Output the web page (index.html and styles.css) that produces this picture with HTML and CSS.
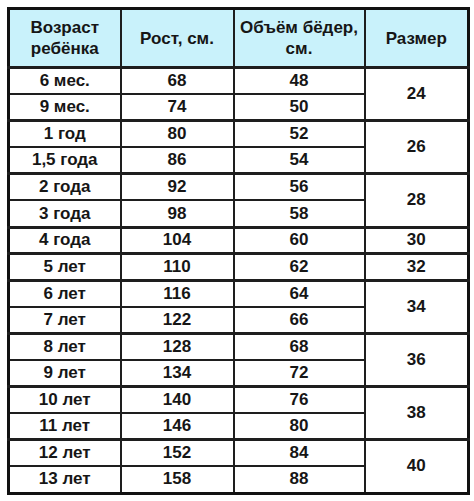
FILE: index.html
```html
<!DOCTYPE html>
<html lang="ru">
<head>
<meta charset="utf-8">
<title>Размеры</title>
<link rel="stylesheet" href="styles.css">
</head>
<body>
<table class="sizes">
  <colgroup>
    <col class="c1"><col class="c2"><col class="c3"><col class="c4">
  </colgroup>
  <thead>
    <tr class="head">
      <th>Возраст<br>ребёнка</th>
      <th>Рост, см.</th>
      <th>Объём бёдер,<br>см.</th>
      <th>Размер</th>
    </tr>
  </thead>
  <tbody>
    <tr class="g"><td>6 мес.</td><td>68</td><td>48</td><td rowspan="2">24</td></tr>
    <tr><td>9 мес.</td><td>74</td><td>50</td></tr>
    <tr class="g"><td>1 год</td><td>80</td><td>52</td><td rowspan="2">26</td></tr>
    <tr><td>1,5 года</td><td>86</td><td>54</td></tr>
    <tr class="g"><td>2 года</td><td>92</td><td>56</td><td rowspan="2">28</td></tr>
    <tr><td>3 года</td><td>98</td><td>58</td></tr>
    <tr class="g"><td>4 года</td><td>104</td><td>60</td><td>30</td></tr>
    <tr class="g"><td>5 лет</td><td>110</td><td>62</td><td>32</td></tr>
    <tr class="g"><td>6 лет</td><td>116</td><td>64</td><td rowspan="2">34</td></tr>
    <tr><td>7 лет</td><td>122</td><td>66</td></tr>
    <tr class="g"><td>8 лет</td><td>128</td><td>68</td><td rowspan="2">36</td></tr>
    <tr><td>9 лет</td><td>134</td><td>72</td></tr>
    <tr class="g"><td>10 лет</td><td>140</td><td>76</td><td rowspan="2">38</td></tr>
    <tr><td>11 лет</td><td>146</td><td>80</td></tr>
    <tr class="g"><td>12 лет</td><td>152</td><td>84</td><td rowspan="2">40</td></tr>
    <tr><td>13 лет</td><td>158</td><td>88</td></tr>
  </tbody>
</table>
</body>
</html>
```
FILE: styles.css
```css
html, body {
  margin: 0;
  padding: 0;
  background: #ffffff;
}
body {
  padding: 7px 0 0 7px;
  font-family: "Liberation Sans", Arial, sans-serif;
  color: #161616;
}
.sizes {
  border-collapse: collapse;
  table-layout: fixed;
  width: 460px;
  border: 3px solid #111111;
  font-size: 17px;
  font-weight: bold;
}
.c1 { width: 112px; }
.c2 { width: 113px; }
.c3 { width: 131px; }
.c4 { width: 104px; }
.sizes th, .sizes td {
  border: 2px solid #1e1e1e;
  text-align: center;
  vertical-align: middle;
  padding: 0;
}
.sizes th {
  background: #c9f2fb;
  font-weight: bold;
  line-height: 21px;
  border-bottom-width: 3px;
}
.head { height: 59px; }
.sizes tbody tr { height: 26.6px; }
.sizes tbody tr.g td { border-top-width: 3px; }
.sizes td { line-height: 20px; }
```
